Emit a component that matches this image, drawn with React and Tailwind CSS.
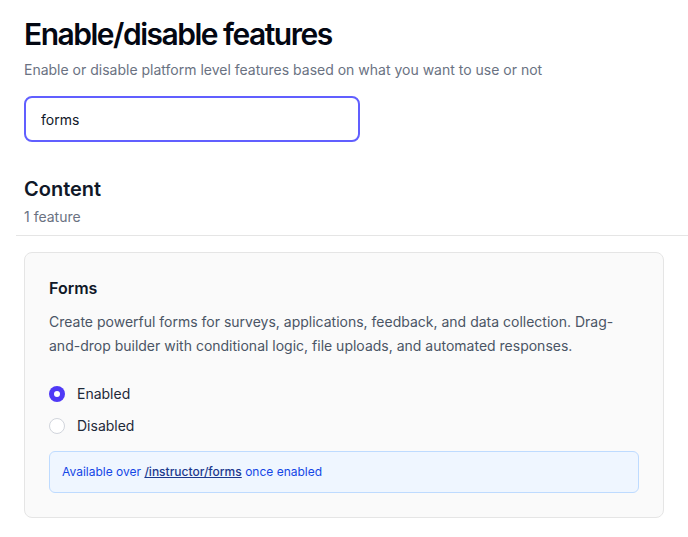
import React, { useState } from 'react'

const Radio = ({ checked, label, onChange }) => {
    return (
        <label className="flex items-center gap-3 h-6 cursor-pointer" onClick={onChange}>
            <span className={`w-4 h-4 rounded-full flex items-center justify-center ${checked ? 'bg-indigo-600' : 'bg-white border border-gray-300'}`}>
                {checked && <span className="w-1.5 h-1.5 rounded-full bg-white"></span>}
            </span>
            <span className="text-sm text-gray-800">{label}</span>
        </label>
    )
}

const App = () => {
    const [query, setQuery] = useState('forms')
    const [enabled, setEnabled] = useState(true)

    return (
        <div className="min-h-screen bg-white pl-4 pt-4 text-gray-900" style={{ fontFamily: 'Inter, "Noto Sans", sans-serif' }}>
            <div className="px-2">
                <h1 className="text-3xl font-semibold tracking-[-0.05em] text-gray-950">Enable/disable features</h1>
                <p className="mt-2 text-sm text-gray-500">Enable or disable platform level features based on what you want to use or not</p>
                <input
                    autoFocus
                    value={query}
                    onChange={(e) => setQuery(e.target.value)}
                    className="mt-4 w-[336px] h-[46px] rounded-lg border-2 border-indigo-500 px-[15px] text-sm text-gray-900 outline-none"
                />
                <h2 className="mt-[33px] text-xl font-semibold text-gray-900">Content</h2>
                <p className="mt-1 text-sm text-gray-500">1 feature</p>
            </div>
            <div className="mt-2 border-t border-neutral-200"></div>
            <div className="px-2 mt-4">
                <div className="w-[640px] rounded-lg border border-neutral-200 bg-neutral-50 p-6">
                    <h3 className="text-base font-semibold text-gray-900 -mt-px">Forms</h3>
                    <p className="mt-2.5 text-sm leading-6 text-gray-600">
                        Create powerful forms for surveys, applications, feedback, and data collection. Drag-and-drop builder with conditional logic, file uploads, and automated responses.
                    </p>
                    <div className="mt-6 flex flex-col gap-2">
                        <Radio checked={enabled} label="Enabled" onChange={() => setEnabled(true)} />
                        <Radio checked={!enabled} label="Disabled" onChange={() => setEnabled(false)} />
                    </div>
                    <div className="mt-[13px] rounded-md border border-blue-200 bg-blue-50 px-3 py-3 text-xs text-blue-700">
                        Available over <a href="#" className="font-medium text-blue-900 underline">/instructor/forms</a> once enabled
                    </div>
                </div>
            </div>
        </div>
    )
}

export default App
